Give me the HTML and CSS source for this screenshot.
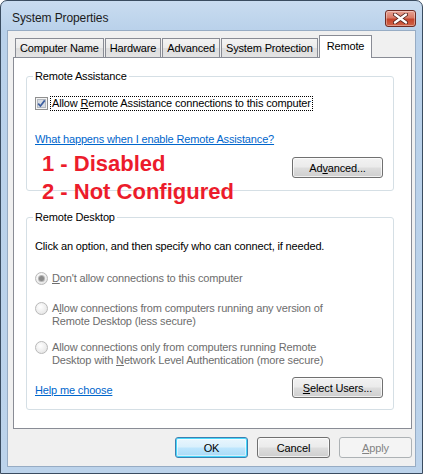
FILE: index.html
```html
<!DOCTYPE html>
<html>
<head>
    <title>System Properties</title>
    <link rel="stylesheet" href="styles.css">
</head>
<body>
    <div class="window">
        <div class="titlebar">
            <span class="title">System Properties</span>
            <button class="close" title="Close">
                <svg width="15" height="11" viewBox="0 0 15 11">
                    <path d="M2 1.5 L13 9.5 M13 1.5 L2 9.5" stroke="#4a1d18" stroke-width="4" stroke-linecap="round"/>
                    <path d="M2 1.5 L13 9.5 M13 1.5 L2 9.5" stroke="#ffffff" stroke-width="2.4" stroke-linecap="round"/>
                </svg>
            </button>
        </div>

        <div class="client">
            <div class="tabs">
                <div class="tab">Computer Name</div>
                <div class="tab">Hardware</div>
                <div class="tab">Advanced</div>
                <div class="tab">System Protection</div>
                <div class="tab active">Remote</div>
            </div>

            <div class="panel">
                <fieldset class="group group-assist">
                    <legend>Remote Assistance</legend>
                    <div class="check-row">
                        <span class="checkbox">
                            <svg width="13" height="13" viewBox="0 0 13 13">
                                <rect x="0.5" y="0.5" width="12" height="12" fill="#f4f4f4" stroke="#8f8f8f"/>
                                <rect x="2.5" y="2.5" width="8" height="8" fill="#d9dde3" stroke="#b4b9c0"/>
                                <path d="M3.2 6.6 L5.4 9 L9.8 3.4" fill="none" stroke="#3d5fa0" stroke-width="1.7"/>
                            </svg>
                        </span>
                        <span class="focus">Allow <u>R</u>emote Assistance connections to this computer</span>
                    </div>
                    <div class="link-row"><a href="#">What happens when I enable Remote Assistance?</a></div>
                    <div class="button-row">
                        <button class="btn">Ad<u>v</u>anced...</button>
                    </div>
                </fieldset>

                <fieldset class="group group-desktop">
                    <legend>Remote Desktop</legend>
                    <p class="intro">Click an option, and then specify who can connect, if needed.</p>
                    <div class="radio-row first">
                        <span class="radio checked"></span>
                        <span class="radio-label"><u>D</u>on't allow connections to this computer</span>
                    </div>
                    <div class="radio-row">
                        <span class="radio"></span>
                        <span class="radio-label">A<u>l</u>low connections from computers running any version of<br>Remote Desktop (less secure)</span>
                    </div>
                    <div class="radio-row third">
                        <span class="radio"></span>
                        <span class="radio-label">Allow connections only from computers running Remote<br>Desktop with <u>N</u>etwork Level Authentication (more secure)</span>
                    </div>
                    <div class="button-row split">
                        <a href="#" class="help">Help me choose</a>
                        <button class="btn"><u>S</u>elect Users...</button>
                    </div>
                </fieldset>

                <div class="note">
                    <div>1 - Disabled</div>
                    <div>2 - Not Configured</div>
                </div>
            </div>

            <div class="footer">
                <button class="btn default">OK</button>
                <button class="btn">Cancel</button>
                <button class="btn" disabled><u>A</u>pply</button>
            </div>
        </div>
    </div>
</body>
</html>
```

FILE: styles.css
```css
body {
    margin: 0;
    background: #ffffff;
    font-family: "Liberation Sans", Arial, sans-serif;
    font-size: 11px;
    letter-spacing: -0.15px;
    color: #000000;
}
.window {
    width: 421px;
    height: 472px;
    border: 1px solid #3a4c60;
    border-radius: 7px 7px 0 0;
    background: linear-gradient(to bottom, #c9dcf0 0px, #b9d1ea 30px, #bcd3eb 100%);
    display: flex;
    flex-direction: column;
}
.titlebar {
    height: 29px;
    display: flex;
    align-items: flex-start;
    justify-content: space-between;
    padding: 0 6px 0 11px;
}
.title {
    font-size: 12px;
    line-height: 15px;
    letter-spacing: -0.1px;
    color: #1b1b1b;
    margin-top: 10px;
}
.close {
    width: 31px;
    height: 17px;
    margin-top: 9px;
    padding: 0;
    border: 1px solid #6e2b24;
    border-radius: 3px;
    background: linear-gradient(to bottom, #e8a294 0%, #d87a66 45%, #c4432b 55%, #d0654a 100%);
    box-shadow: inset 0 0 0 1px rgba(255, 255, 255, 0.35);
    display: flex;
    align-items: center;
    justify-content: center;
}
.client {
    flex: 1;
    margin: 0 6px 6px 6px;
    border: 1px solid #97acc4;
    background: #f0f0f0;
    padding: 5px 3px 0 5px;
    display: flex;
    flex-direction: column;
}
.tabs {
    height: 21px;
    display: flex;
    align-items: flex-end;
    padding-left: 2px;
    position: relative;
    z-index: 1;
}
.tab {
    height: 18px;
    line-height: 19px;
    padding: 0 4px;
    margin-right: 1px;
    border: 1px solid #898c95;
    border-bottom: none;
    background: linear-gradient(to bottom, #f3f3f3 0%, #ebebeb 50%, #dddddd 51%, #e4e4e4 100%);
    color: #000000;
}
.tab.active {
    height: 22px;
    line-height: 20px;
    margin: 0 0 -1px 0;
    padding: 0 7px;
    background: #ffffff;
}
.panel {
    position: relative;
    box-sizing: border-box;
    height: 372px;
    border: 1px solid #898c95;
    background: #ffffff;
    padding: 11px 17px 0 12px;
}
.group {
    box-sizing: border-box;
    margin: 0;
    padding: 0 10px 0 8px;
    border: 1px solid #d5dfe5;
    border-radius: 3px;
}
.group legend {
    padding: 0 2px;
    margin-left: -2px;
    line-height: 15px;
}
.group-assist {
    height: 122px;
}
.group-desktop {
    margin-top: 19px;
    height: 200px;
}
.check-row {
    margin-top: 12px;
    display: flex;
    align-items: center;
    height: 15px;
}
.checkbox {
    width: 13px;
    height: 13px;
    margin-right: 2px;
    display: flex;
}
.focus {
    border: 1px dotted #000000;
    padding: 0 1px;
    line-height: 13px;
}
a {
    color: #0066cc;
    text-decoration: underline;
}
.link-row {
    margin-top: 21px;
    line-height: 15px;
}
.button-row {
    margin-top: 10px;
    display: flex;
    justify-content: flex-end;
    align-items: center;
}
.button-row.split {
    margin-top: 10px;
    justify-content: space-between;
}
.help {
    margin-top: 5px;
}
.btn {
    width: 91px;
    height: 21px;
    padding: 0;
    border: 1px solid #707070;
    border-radius: 3px;
    background: linear-gradient(to bottom, #f2f2f2 0%, #ebebeb 48%, #dddddd 52%, #cfcfcf 100%);
    box-shadow: inset 0 0 0 1px rgba(255, 255, 255, 0.7);
    font-family: inherit;
    font-size: 11px;
    letter-spacing: -0.15px;
    color: #000000;
}
.footer .btn {
    width: 73px;
}
.btn.default {
    border-color: #3c7fb1;
    box-shadow: inset 0 0 0 1px #48d8fb, inset 0 0 0 2px rgba(255, 255, 255, 0.5);
    background: linear-gradient(to bottom, #eaf6fd 0%, #d9f0fc 48%, #bee6fd 52%, #a7d9f5 100%);
}
.btn:disabled {
    border-color: #adb2b5;
    background: #f4f4f4;
    box-shadow: none;
    color: #838383;
}
.intro {
    margin: 14px 0 0 0;
    line-height: 15px;
}
.radio-row {
    display: flex;
    align-items: flex-start;
    margin-top: 17px;
    color: #6d6d6d;
}
.radio-row.first {
    margin-top: 18px;
}
.radio-row.third {
    margin-top: 13px;
}
.radio {
    width: 11px;
    height: 11px;
    margin: 0 4px 0 0;
    border: 1px solid #b9b9b9;
    border-radius: 50%;
    background: radial-gradient(circle at 40% 35%, #ffffff 0%, #ececec 60%, #dcdcdc 100%);
    display: flex;
    align-items: center;
    justify-content: center;
    flex-shrink: 0;
}
.radio.checked::after {
    content: "";
    width: 5px;
    height: 5px;
    border-radius: 50%;
    background: #8a8a8a;
    box-shadow: 0 0 0 1px #b5b5b5;
}
.radio-label {
    line-height: 13px;
}
.note {
    position: absolute;
    left: 28px;
    top: 92px;
    font-size: 22px;
    font-weight: bold;
    line-height: 28px;
    letter-spacing: 0;
    color: #ec1c2b;
}
.footer {
    display: flex;
    justify-content: flex-end;
    gap: 9px;
    margin-top: 8px;
}
```
